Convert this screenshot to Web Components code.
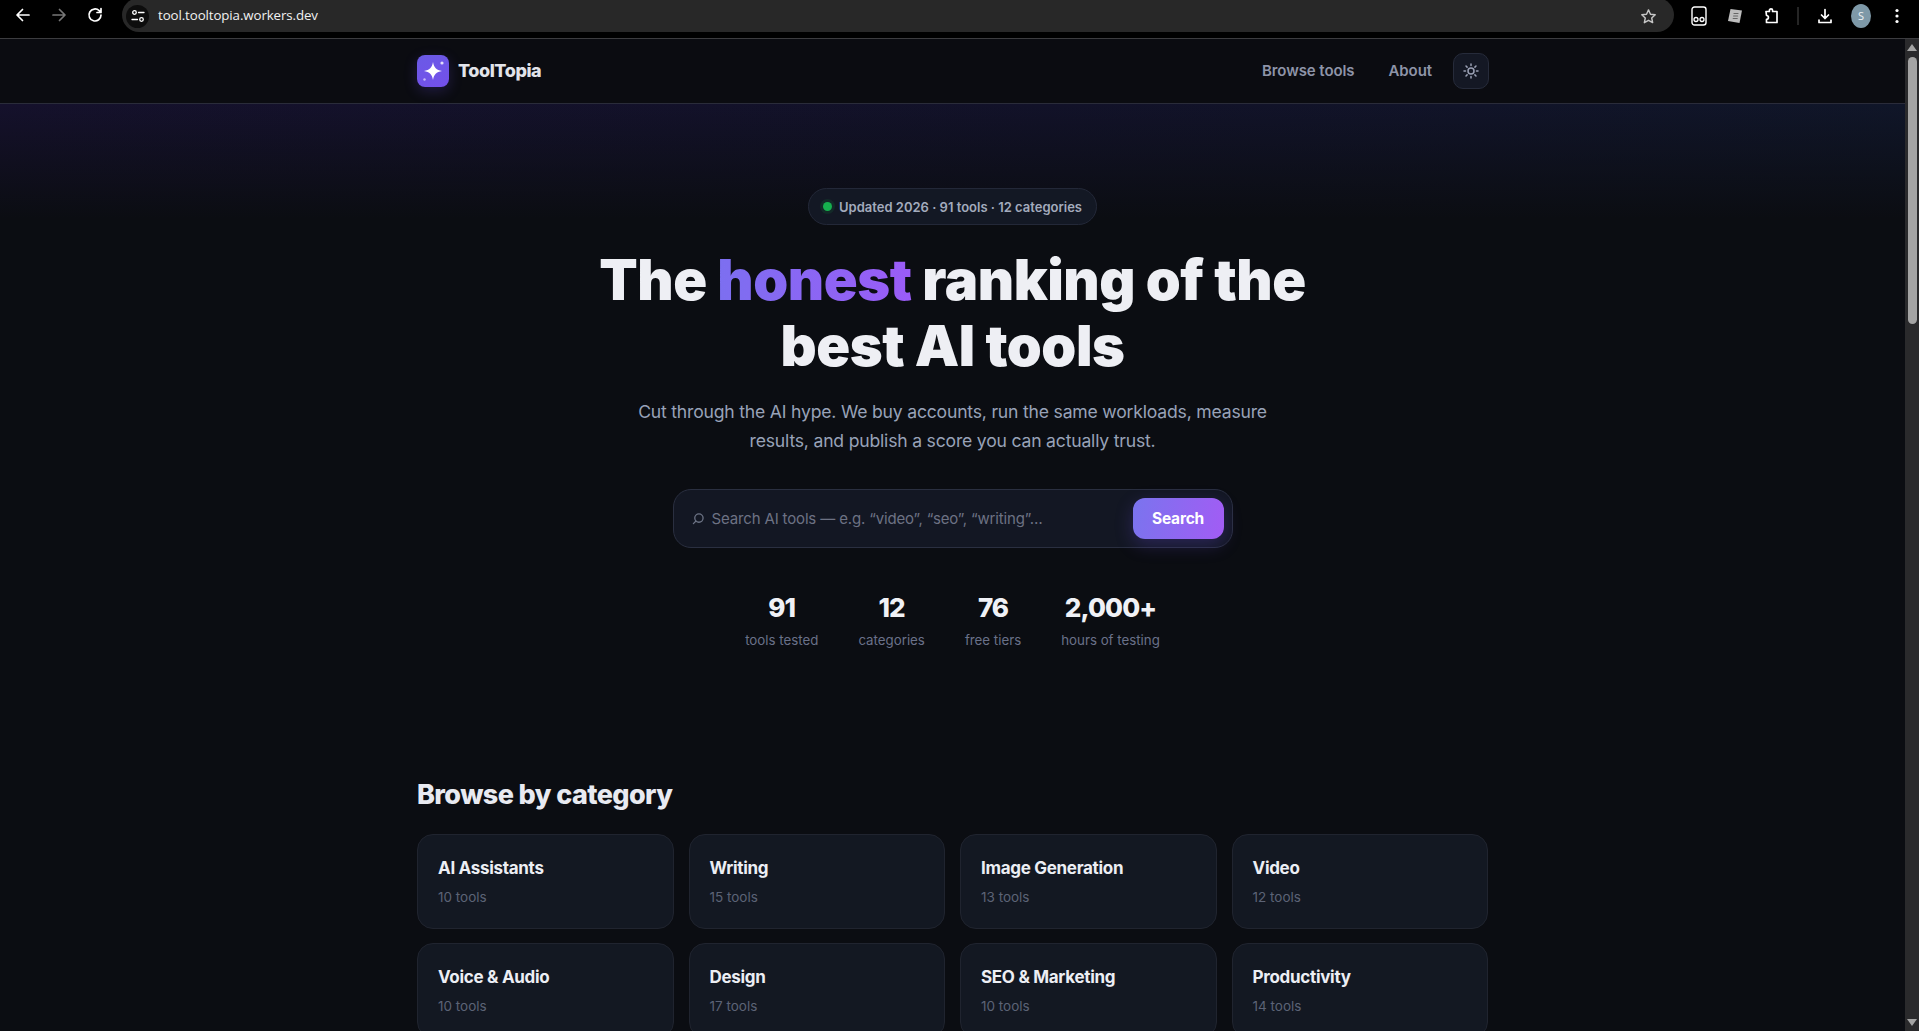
<!DOCTYPE html>
<html lang="en">
<head>
<meta charset="utf-8">
<title>ToolTopia</title>
<style>
  html, body { margin: 0; height: 100%; overflow: hidden; background: #0b0d12; }
  body { font-family: Inter, "Liberation Sans", sans-serif; display: flex; flex-direction: column; }
  .window { flex: 1; min-height: 0; display: flex; }
  .page { flex: 1; min-width: 0; overflow: hidden; }
</style>
</head>
<body>
<browser-bar url="tool.tooltopia.workers.dev"></browser-bar>
<div class="window">
  <div class="page">
    <site-nav></site-nav>
    <hero-section>
      <span slot="badge">Updated 2026 · 91 tools · 12 categories</span>
      <stat-item value="91" label="tools tested" slot="stats"></stat-item>
      <stat-item value="12" label="categories" slot="stats"></stat-item>
      <stat-item value="76" label="free tiers" slot="stats"></stat-item>
      <stat-item value="2,000+" label="hours of testing" slot="stats"></stat-item>
    </hero-section>
    <category-section heading="Browse by category">
      <category-card name="AI Assistants" count="10 tools"></category-card>
      <category-card name="Writing" count="15 tools"></category-card>
      <category-card name="Image Generation" count="13 tools"></category-card>
      <category-card name="Video" count="12 tools"></category-card>
      <category-card name="Voice &amp; Audio" count="10 tools"></category-card>
      <category-card name="Design" count="17 tools"></category-card>
      <category-card name="SEO &amp; Marketing" count="10 tools"></category-card>
      <category-card name="Productivity" count="14 tools"></category-card>
    </category-section>
  </div>
  <page-scrollbar></page-scrollbar>
</div>

<script>
// small helper so each class only has to hand over its html
function shadow(el, html) {
  el.attachShadow({ mode: 'open' }).innerHTML = html;
}

class BrowserBar extends HTMLElement {
  connectedCallback() {
    shadow(this, `
      <style>
        :host { display: flex; align-items: flex-start; height: 39px; flex: none; background: #000; box-sizing: border-box; border-bottom: 1px solid #3c3c3f; overflow: hidden; }
        svg { display: block; fill: none; stroke: #fff; stroke-width: 1.7; stroke-linecap: round; stroke-linejoin: round; }
        .nav { display: flex; gap: 18px; padding: 6px 0 0 14px; width: 122px; box-sizing: border-box; flex: none; }
        .nav svg { width: 18px; height: 18px; }
        .omni { flex: none; width: 1552px; height: 34px; margin-top: -2px; padding: 2px 17px 0 4px; background: #282828; border-radius: 17px; display: flex; align-items: center; box-sizing: border-box; }
        .chip { width: 23px; height: 23px; border-radius: 50%; background: #0d0d0d; display: grid; place-items: center; margin-right: 9px; }
        .chip svg { width: 14px; height: 14px; stroke-width: 1.3; }
        .url { font: 13.3px/1 "Open Sans", "Noto Sans", sans-serif; color: #f1f1f1; letter-spacing: -.1px; flex: 1; }
        .star { width: 17px; height: 17px; stroke: #c7c7c7; stroke-width: 1.5; }
        .tools { display: flex; align-items: center; height: 32px; flex: 1; position: relative; }
        .tools > * { position: absolute; top: 50%; transform: translate(-50%, -50%); }
        .tools svg { width: 18px; height: 18px; }
        .sep { width: 1px; height: 18px; background: #4a4a4a; }
        .avatar { width: 20px; height: 24px; border-radius: 50%; background: #7e99a8; color: #eef3f5; font: 11px/24px "Open Sans", sans-serif; text-align: center; }
      </style>
      <div class="nav">
        <svg viewBox="0 0 18 18"><path d="M15 9H3.5M8.5 3.5 3 9l5.5 5.5"/></svg>
        <svg viewBox="0 0 18 18" style="stroke:#777"><path d="M3 9h11.5M9.5 3.5 15 9l-5.5 5.5"/></svg>
        <svg viewBox="0 0 18 18"><path d="M15 9a6 6 0 1 1-1.8-4.3L15 6.5M15 2.5v4h-4"/></svg>
      </div>
      <div class="omni">
        <div class="chip"><svg viewBox="0 0 14 14"><circle cx="3.5" cy="3.5" r="1.8"/><path d="M7.5 3.5H13M1 10.5h5.5"/><circle cx="10.5" cy="10.5" r="1.8"/></svg></div>
        <div class="url">${this.getAttribute('url')}</div>
        <svg class="star" viewBox="0 0 18 18"><path d="m9 2 2.1 4.6 5 .6-3.7 3.4 1 4.9L9 13l-4.4 2.5 1-4.9-3.7-3.4 5-.6z"/></svg>
      </div>
      <div class="tools">
        <svg style="left:25px;width:16px;height:20px" viewBox="0 0 16 20"><rect x="1" y="1" width="14" height="18" rx="2.5" stroke-width="1.4"/><circle cx="5" cy="13.5" r="2" stroke-width="1.3"/><circle cx="11" cy="13.5" r="2" stroke-width="1.3"/></svg>
        <svg style="left:61px;stroke:none" viewBox="0 0 18 18"><path fill="#bdbdbd" d="M4.5 2 16 3.5 13.5 16 2 14z"/><path fill="none" stroke="#666" stroke-width="1.2" d="M8 6.5h4M7.6 9h4M7.2 11.5h4"/></svg>
        <svg style="left:97px" viewBox="0 0 18 18"><path d="M4 4.5h3.4V3.4a1.6 1.6 0 0 1 3.2 0v1.1H15v11H4.5v-3.2a1.9 1.9 0 0 0 0-3.8z"/></svg>
        <div class="sep" style="left:124px"></div>
        <svg style="left:151px" viewBox="0 0 18 18"><path d="M9 2.5v9M5.5 8 9 11.5 12.5 8M3 13v2.5h12V13"/></svg>
        <div class="avatar" style="left:187px">S</div>
        <svg style="left:223px;stroke:none" viewBox="0 0 18 18"><g fill="#fff"><circle cx="9" cy="3.5" r="1.6"/><circle cx="9" cy="9" r="1.6"/><circle cx="9" cy="14.5" r="1.6"/></g></svg>
      </div>
    `);
  }
}
customElements.define('browser-bar', BrowserBar);

class SiteNav extends HTMLElement {
  connectedCallback() {
    shadow(this, `
      <style>
        :host { display: block; height: 65px; box-sizing: border-box; border-bottom: 1px solid #2a2c3a; background: #0b0c11; }
        .inner { width: 1072px; height: 100%; margin-left: 417px; display: flex; align-items: center; }
        .logo { width: 32px; height: 32px; border-radius: 8px; background: linear-gradient(160deg, #6a5ae6, #7450ea); box-shadow: 0 4px 14px rgba(110,80,240,.22); margin-right: 9px; }
        .logo svg { width: 32px; height: 32px; display: block; }
        .brand { font-size: 18px; font-weight: 800; letter-spacing: -.45px; color: #e2e4ea; margin-bottom: 2px; }
        nav { margin-left: auto; display: flex; align-items: center; gap: 34px; }
        a { font-size: 15px; font-weight: 600; color: #8e94a8; text-decoration: none; letter-spacing: -.08px; margin-bottom: 2px; }
        button { width: 36px; height: 36px; margin-left: -13px; padding: 0; border-radius: 10px; border: 1px solid #262b3a; background: #141824; display: grid; place-items: center; }
        button svg { width: 16px; height: 16px; fill: none; stroke: #9aa0b4; stroke-width: 1.5; stroke-linecap: round; }
      </style>
      <div class="inner">
        <div class="logo"><svg viewBox="0 0 32 32"><path fill="#fff" d="M16 7c1 5.700 3.300 8 9 9-5.700 1-8 3.300-9 9-1-5.700-3.300-8-9-9 5.700-1 8-3.300 9-9z"/><circle cx="25" cy="8" r="1.6" fill="#fff" opacity=".8"/><circle cx="7.500" cy="24.500" r="1.200" fill="#fff" opacity=".6"/></svg></div>
        <span class="brand">ToolTopia</span>
        <nav>
          <a href="#">Browse tools</a>
          <a href="#">About</a>
          <button aria-label="Theme"><svg viewBox="0 0 16 16"><circle cx="8" cy="8" r="3"/><path d="M8 1v1.500M8 13.500V15M1 8h1.500M13.500 8H15M3 3l1.100 1.100M11.900 11.900 13 13M3 13l1.100-1.100M11.900 4.100 13 3"/></svg></button>
        </nav>
      </div>
    `);
  }
}
customElements.define('site-nav', SiteNav);

class StatItem extends HTMLElement {
  connectedCallback() {
    shadow(this, `
      <style>
        :host { display: block; text-align: center; }
        b { display: block; font-size: 26px; line-height: 34px; font-weight: 800; color: #f0f1f6; letter-spacing: -.9px; }
        span { display: block; margin-top: 6px; font-size: 13.3px; line-height: 18px; color: #6a7189; }
      </style>
      <b>${this.getAttribute('value')}</b>
      <span>${this.getAttribute('label')}</span>
    `);
  }
}
customElements.define('stat-item', StatItem);

class HeroSection extends HTMLElement {
  connectedCallback() {
    shadow(this, `
      <style>
        :host { display: block; height: 674px; box-sizing: border-box; padding-top: 84px; text-align: center;
          background: linear-gradient(180deg, rgba(11,13,18,0) 0, #0b0d12 115px) no-repeat, linear-gradient(90deg, #15112c, #121229 55%, #101629) no-repeat; }
        .badge { display: inline-flex; align-items: center; gap: 7px; height: 37px; box-sizing: border-box; padding: 0 14px; border-radius: 19px; border: 1px solid #232838; background: #131824; color: #a3abbd; font-size: 13px; font-weight: 600; }
        .dot { width: 9px; height: 9px; border-radius: 50%; background: #16b04e; box-shadow: 0 0 0 3px rgba(22,176,78,.12); }
        h1 { margin: 22px auto 0; width: 760px; font-size: 56px; line-height: 66px; font-weight: 900; letter-spacing: -.45px; color: #eeeff4; }
        em { font-style: normal; background: linear-gradient(90deg, #7c6ff0, #9b5cf7); -webkit-background-clip: text; background-clip: text; color: transparent; }
        p { margin: 18px auto 0; width: 680px; font-size: 17.6px; line-height: 29px; color: #98a2b8; letter-spacing: -.2px; }
        .search { margin: 34px auto 0; width: 560px; height: 59px; box-sizing: border-box; display: flex; align-items: center; padding: 0 8px 0 18px; border: 1px solid #2a2f40; border-radius: 18px; background: #131723; }
        .search svg { width: 12px; height: 12px; fill: none; stroke: #6d7486; stroke-width: 1.4; stroke-linecap: round; margin-right: 8px; flex: none; }
        .ph { flex: 1; text-align: left; font-size: 15px; color: #6d7283; letter-spacing: -.15px; }
        button { width: 91px; height: 41px; border: 0; border-radius: 12px; background: linear-gradient(100deg, #7a74ee, #a25cf4); color: #fff; font: 700 15.5px Inter, sans-serif; letter-spacing: -.2px; box-shadow: 0 6px 18px rgba(110,80,240,.25); }
        .stats { margin-top: 43px; display: flex; justify-content: center; gap: 40px; }
      </style>
      <div class="badge"><span class="dot"></span><slot name="badge"></slot></div>
      <h1>The <em>honest</em> ranking of the<br>best AI tools</h1>
      <p>Cut through the AI hype. We buy accounts, run the same workloads, measure results, and publish a score you can actually trust.</p>
      <div class="search">
        <svg viewBox="0 0 13 13"><circle cx="7.500" cy="5.500" r="4.500"/><path d="M4.300 8.700 1.500 11.500"/></svg>
        <span class="ph">Search AI tools — e.g. “video”, “seo”, “writing”…</span>
        <button>Search</button>
      </div>
      <div class="stats"><slot name="stats"></slot></div>
    `);
  }
}
customElements.define('hero-section', HeroSection);

class CategorySection extends HTMLElement {
  connectedCallback() {
    shadow(this, `
      <style>
        :host { display: block; width: 1071px; margin-left: 417px; }
        h2 { margin: 0 0 22px; font-size: 27px; line-height: 34px; font-weight: 800; letter-spacing: -.6px; color: #e8eaf1; }
        .grid { display: grid; grid-template-columns: repeat(4, 1fr); gap: 14px 15px; }
      </style>
      <h2>${this.getAttribute('heading')}</h2>
      <div class="grid"><slot></slot></div>
    `);
  }
}
customElements.define('category-section', CategorySection);

class CategoryCard extends HTMLElement {
  connectedCallback() {
    shadow(this, `
      <style>
        :host { display: block; height: 95px; box-sizing: border-box; padding: 22px 20px; border: 1px solid #20242f; border-radius: 16px; background: #131822; }
        b { display: block; font-size: 17px; line-height: 22px; font-weight: 700; color: #eceef4; letter-spacing: -.3px; }
        span { display: block; margin-top: 9px; font-size: 13.5px; line-height: 18px; color: #5c6376; }
      </style>
      <b>${this.getAttribute('name').replace('&', '&amp;')}</b>
      <span>${this.getAttribute('count')}</span>
    `);
  }
}
customElements.define('category-card', CategoryCard);

class PageScrollbar extends HTMLElement {
  connectedCallback() {
    shadow(this, `
      <style>
        :host { display: flex; flex-direction: column; align-items: center; width: 14px; flex: none; background: #2a2a2c; }
        .arrow { width: 0; height: 0; border-left: 5px solid transparent; border-right: 5px solid transparent; flex: none; }
        .up { border-bottom: 7px solid #a4a4a4; margin-top: 5px; }
        .down { border-top: 7px solid #a4a4a4; margin-top: auto; margin-bottom: 5px; }
        .thumb { width: 9px; height: 267px; border-radius: 5px; background: #a4a4a4; margin-top: 6px; }
      </style>
      <div class="arrow up"></div>
      <div class="thumb"></div>
      <div class="arrow down"></div>
    `);
  }
}
customElements.define('page-scrollbar', PageScrollbar);
</script>
</body>
</html>
